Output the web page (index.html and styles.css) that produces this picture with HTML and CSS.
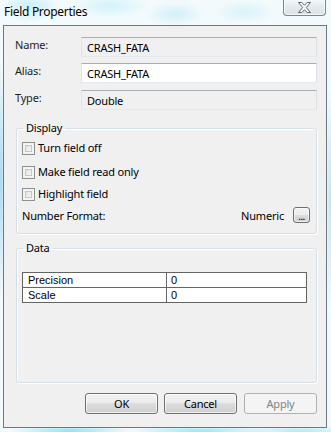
FILE: index.html
```html
<!DOCTYPE html>
<html>
<head>
<meta charset="utf-8">
<link rel="stylesheet" href="styles.css">
</head>
<body>
<div class="window">
  <div class="titlebar">
    <span class="title">Field Properties</span>
    <div class="close">
      <svg width="13" height="11" viewBox="0 0 13 11"><polygon points="0.5,0.5 3.8,0.5 6.5,3.3 9.2,0.5 12.5,0.5 8.3,5.5 12.5,10.5 9.2,10.5 6.5,7.7 3.8,10.5 0.5,10.5 4.7,5.5" fill="#fbfbfb" stroke="#5f666c" stroke-width="1" stroke-linejoin="round"/></svg>
    </div>
  </div>
  <div class="client">
    <div class="fields">
      <div class="row"><span class="lbl">Name:</span><div class="box ro">CRASH_FATA</div></div>
      <div class="row r2"><span class="lbl">Alias:</span><div class="box">CRASH_FATA</div></div>
      <div class="row r3"><span class="lbl">Type:</span><div class="box ro">Double</div></div>
    </div>
    <fieldset class="group display">
      <legend>Display</legend>
      <div class="check c1"><span class="cb"></span><span>Turn field off</span></div>
      <div class="check c2"><span class="cb"></span><span>Make field read only</span></div>
      <div class="check c3"><span class="cb"></span><span>Highlight field</span></div>
      <div class="numfmt">
        <span class="nf-label">Number Format:</span>
        <span class="nf-value">Numeric</span>
        <span class="dots">...</span>
      </div>
    </fieldset>
    <fieldset class="group data">
      <legend>Data</legend>
      <table class="grid">
        <tr><td class="k">Precision</td><td>0</td></tr>
        <tr><td class="k">Scale</td><td>0</td></tr>
      </table>
    </fieldset>
    <div class="buttons">
      <span class="btn">OK</span>
      <span class="btn">Cancel</span>
      <span class="btn disabled">Apply</span>
    </div>
  </div>
</div>
</body>
</html>
```
FILE: styles.css
```css
* { box-sizing: border-box; }
html, body { margin: 0; padding: 0; }
body {
  width: 331px;
  height: 432px;
  overflow: hidden;
  font-family: "Noto Sans", sans-serif;
  font-size: 11px;
  letter-spacing: -0.2px;
  color: #000;
}
.window {
  width: 331px;
  height: 432px;
  display: flex;
  flex-direction: column;
  padding: 0 4px 4px 3px;
  background:
    radial-gradient(ellipse 30px 14px at 30px 8px, rgba(170,232,245,0.7), rgba(170,232,245,0) 100%),
    radial-gradient(ellipse 40px 12px at 110px 6px, rgba(190,238,248,0.6), rgba(190,238,248,0) 100%),
    radial-gradient(ellipse 30px 12px at 175px 14px, rgba(180,232,245,0.55), rgba(180,232,245,0) 100%),
    radial-gradient(ellipse 30px 12px at 245px 12px, rgba(190,236,248,0.5), rgba(190,236,248,0) 100%),
    radial-gradient(ellipse 60px 6px at 70px 431px, rgba(140,225,245,0.95), rgba(140,225,245,0) 100%),
    radial-gradient(ellipse 70px 6px at 200px 431px, rgba(150,230,245,0.95), rgba(150,230,245,0) 100%),
    radial-gradient(ellipse 60px 5px at 300px 431px, rgba(160,230,245,0.8), rgba(160,230,245,0) 100%),
    radial-gradient(ellipse 4px 120px at 1px 180px, rgba(150,205,235,0.8), rgba(150,205,235,0) 100%),
    radial-gradient(ellipse 4px 120px at 330px 200px, rgba(170,220,238,0.7), rgba(170,220,238,0) 100%),
    #f3fafc;
}
.titlebar {
  height: 25px;
  display: flex;
  justify-content: space-between;
  align-items: flex-start;
  padding-left: 1px;
  padding-right: 1px;
}
.title {
  font-size: 12px;
  letter-spacing: -0.3px;
  line-height: 16px;
  margin-top: 4px;
  color: #000;
  text-shadow: 0 0 6px #fff, 0 0 3px #fff;
}
.close {
  width: 43px;
  height: 17px;
  margin-top: -1px;
  border: 1px solid #7b858e;
  border-top: none;
  border-radius: 0 0 4px 4px;
  background: linear-gradient(#f6f9fb, #e3eaef 50%, #d9e2e8);
  box-shadow: inset 0 0 0 1px rgba(255,255,255,0.7);
  display: flex;
  align-items: center;
  justify-content: center;
  padding-top: 1px;
}
.close svg { display: block; }
.client {
  flex: 1;
  background: #f0f0f0;
  border: 1px solid #6c7780;
  padding: 11px 9px 0 11px;
  display: flex;
  flex-direction: column;
}
.row {
  display: flex;
  align-items: flex-start;
  height: 20px;
}
.row.r2 { margin-top: 6px; }
.row.r3 { margin-top: 7px; }
.lbl {
  width: 66px;
  line-height: 16px;
  color: #1e1e1e;
}
.box {
  flex: 1;
  height: 20px;
  border: 1px solid #dbdfe6;
  border-top-color: #abadb3;
  border-left-color: #e2e3ea;
  border-right-color: #dbdfe6;
  border-bottom-color: #e3e9ef;
  background: #fff;
  padding-left: 5px;
  line-height: 19px;
}
.box.ro { background: #f0f0f0; }
.group {
  margin: 0 0 0 1px;
  padding: 0 6px 0 5px;
  border: 1px solid #d5dfe5;
  border-radius: 3px;
  box-shadow: inset 1px 1px 0 #fff, 1px 1px 0 #fff;
  min-width: 0;
}
.group legend {
  padding: 0 3px;
  margin-left: 1px;
  line-height: 16px;
  color: #000;
}
.display { margin-top: 10px; padding-top: 4px; padding-bottom: 10px; }
.check {
  display: flex;
  align-items: center;
  height: 16px;
  line-height: 16px;
}
.check.c2 { margin-top: 8px; }
.check.c3 { margin-top: 6px; }
.cb {
  width: 13px;
  height: 13px;
  border: 1px solid #8e8f8f;
  background: #f4f4f4;
  margin-right: 3px;
  position: relative;
  flex: none;
}
.cb::after {
  content: "";
  position: absolute;
  left: 2px; top: 2px; right: 2px; bottom: 2px;
  border: 1px solid #c4c6c8;
  background: linear-gradient(135deg, #e2e3e4, #f6f6f6);
}
.numfmt {
  display: flex;
  align-items: center;
  margin-top: 5px;
  height: 16px;
}
.nf-label { flex: 1; }
.nf-value { margin-right: 9px; }
.dots {
  width: 17px;
  height: 16px;
  border: 1px solid #707070;
  border-radius: 3px;
  background: linear-gradient(#f2f2f2, #ebebeb 50%, #dddddd 51%, #cfcfcf);
  box-shadow: inset 0 0 0 1px rgba(255,255,255,0.6);
  font-size: 10px;
  line-height: 16px;
  text-align: center;
  letter-spacing: -0.5px;
  color: #000;
}
.data { margin-top: 6px; padding-top: 16px; padding-bottom: 79px; padding-right: 9px; }
.grid {
  width: 100%;
  border-collapse: collapse;
  background: #fff;
  font-family: "Liberation Sans", Arial, sans-serif;
  font-size: 11px;
  letter-spacing: 0;
}
.grid td {
  border: 1px solid #646464;
  height: 15px;
  line-height: 13px;
  padding: 0 0 0 4px;
}
.grid td.k { width: 144px; padding-left: 5px; }
.buttons {
  display: flex;
  justify-content: flex-end;
  gap: 6px;
  margin-top: 10px;
}
.btn {
  width: 73px;
  height: 21px;
  border: 1px solid #707070;
  border-radius: 3px;
  background: linear-gradient(#f2f2f2, #ebebeb 48%, #dddddd 50%, #cfcfcf);
  box-shadow: inset 0 0 0 1px rgba(255,255,255,0.7);
  text-align: center;
  line-height: 19px;
  color: #000;
}
.btn.disabled {
  border-color: #adb2b5;
  background: #f4f4f4;
  color: #838383;
  box-shadow: none;
  margin-left: 1px;
}
```
